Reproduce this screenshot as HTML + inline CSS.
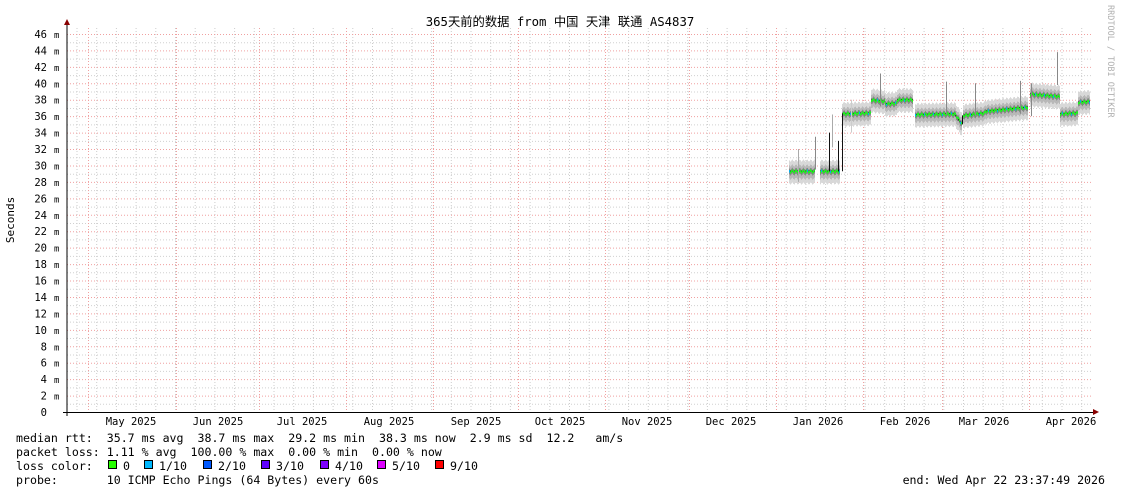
<!DOCTYPE html>
<html><head><meta charset="utf-8"><style>
html,body{margin:0;padding:0;background:#fff;width:1121px;height:494px;overflow:hidden}
svg{display:block}
text{font-family:"DejaVu Sans Mono","Liberation Mono","Noto Sans CJK SC",monospace;fill:#000}
</style></head><body>
<svg id="s" width="1121" height="494" xmlns="http://www.w3.org/2000/svg">
<rect width="1121" height="494" fill="#fff"/>
<g id="grid"></g>
<g id="data"></g>
<line x1="67" y1="24" x2="67" y2="416" stroke="#000" stroke-width="1"/>
<line x1="63" y1="412.5" x2="1096" y2="412.5" stroke="#000" stroke-width="1"/>
<polygon points="64,25 70,25 67,19" fill="#800"/>
<polygon points="1093,409 1093,415 1099,412" fill="#800"/>
<g id="lab" font-size="10.5"></g>
<text x="560" y="26" font-size="12.3" text-anchor="middle" style="font-family:'DejaVu Sans Mono','Noto Sans CJK SC',monospace">365天前的数据 from 中国 天津 联通 AS4837</text>
<text transform="translate(14,220) rotate(-90)" font-size="11" text-anchor="middle">Seconds</text>
<text transform="translate(1108,5) rotate(90)" font-size="8.5" style="fill:#b0b0b0">RRDTOOL / TOBI OETIKER</text>
<g font-size="11.6">
<text x="16" y="442" xml:space="preserve">median rtt:  35.7 ms avg  38.7 ms max  29.2 ms min  38.3 ms now  2.9 ms sd  12.2   am/s</text>
<text x="16" y="456" xml:space="preserve">packet loss: 1.11 % avg  100.00 % max  0.00 % min  0.00 % now</text>
<text x="16" y="470" xml:space="preserve">loss color:</text>
<text x="16" y="484" xml:space="preserve">probe:       10 ICMP Echo Pings (64 Bytes) every 60s</text>
<text x="1105" y="484" text-anchor="end">end: Wed Apr 22 23:37:49 2026</text>
<g id="leg"></g>
</g>
</svg>
<script>
var NS="http://www.w3.org/2000/svg";
function el(p,t,a,txt){var e=document.createElementNS(NS,t);for(var k in a)e.setAttribute(k,a[k]);if(txt!=null)e.textContent=txt;p.appendChild(e);return e;}
var g=document.getElementById('grid'),lab=document.getElementById('lab'),d=document.getElementById('data');
function Y(m){return 412-m*378/46;}
for(var x=77;x<1093;x+=19.7){el(g,'line',{x1:x,y1:28,x2:x,y2:412,stroke:'#ccc','stroke-dasharray':'1,2'});}
for(var m=1;m<=46;m++){el(g,'line',{x1:67,y1:Y(m)+.5,x2:1093,y2:Y(m)+.5,stroke:m%2?'#d0d0d0':'#f0a0a0','stroke-dasharray':'1,2'});}
var months=[88,176,259,346,433,518,605,689,776,863,942,1029];
months.forEach(function(x){el(g,'line',{x1:x+.5,y1:28,x2:x+.5,y2:412,stroke:'#f0a0a0','stroke-dasharray':'1,2'});});
var mn=['May 2025','Jun 2025','Jul 2025','Aug 2025','Sep 2025','Oct 2025','Nov 2025','Dec 2025','Jan 2026','Feb 2026','Mar 2026','Apr 2026'];
var mx=[131,218,302,389,476,560,647,731,818,905,984,1071];
for(var i=0;i<12;i++)el(lab,'text',{x:mx[i],y:425,'text-anchor':'middle'},mn[i]);
for(var m=0;m<=46;m+=2){el(lab,'text',{x:47,y:Y(m)+4,'text-anchor':'end'},String(m));if(m)el(lab,'text',{x:54,y:Y(m)+4,'font-size':'9'},'m');}
var segs=[[789,815,29.3,29.3],[820,840,29.3,29.3],[842,871,36.3,36.4],[871,885,38,37.8],[885,897,37.5,37.6],[897,913,38,38],[915,955,36.2,36.3],[955,962,36.2,35],[963,985,36.1,36.4],[985,1028,36.6,37.1],[1030,1060,38.7,38.4],[1060,1078,36.3,36.4],[1078,1090,37.7,37.8]];
var dpts=[];
segs.forEach(function(s){
 for(var x=s[0];x<s[1];x++){var t=(x-s[0])/(s[1]-s[0]);var v=s[2]+(s[3]-s[2])*t+(Math.sin(x*1.7)*0.12);
  el(d,'rect',{x:x,y:Y(v+1.3),width:1,height:Y(v-1.5)-Y(v+1.3),fill:'#d8d8d8'});
  el(d,'rect',{x:x,y:Y(v+0.7),width:1,height:Y(v-0.9)-Y(v+0.7),fill:'#b8b8b8'});
  el(d,'rect',{x:x,y:Y(v+0.3),width:1,height:Y(v-0.4)-Y(v+0.3),fill:'#888'});
  dpts.push([x,v]);}
});
var pts='';segs.forEach(function(s){pts+='M'+s[0]+','+Y(s[2])+'L'+s[1]+','+Y(s[3]);});
el(d,'path',{d:pts,stroke:'#000',fill:'none','stroke-width':1});
dpts.forEach(function(p,i){el(d,'rect',{x:p[0],y:Y(p[1])-1,width:1,height:2.5,fill:(i%9==0)?'#00b0f0':'#20f020'});});
[[842,29.3,36.3],[829,29.3,34],[838,29.3,33],[962,35,36.1]].forEach(function(v){el(d,'line',{x1:v[0]+.5,y1:Y(v[1]),x2:v[0]+.5,y2:Y(v[2]),stroke:'#111'});});
[[880,41.2,'#888'],[946,40.2,'#888'],[975,40,'#888'],[1057,43.8,'#888'],[1020,40.3,'#888'],[1031,40,'#888'],[798,32,'#aaa'],[815,33.5,'#888'],[832,36.2,'#aaa'],[851,38,'#ccc']].forEach(function(v){el(d,'line',{x1:v[0]+.5,y1:Y(v[1]),x2:v[0]+.5,y2:Y(v[1]-4),stroke:v[2]});});
var lg=document.getElementById('leg');
var cols=['#26ff00','#00b8ff','#0059ff','#5e00ff','#7e00ff','#dd00ff','#ff0000'],lx=[108,144,203,261,320,377,435],lt=['0','1/10','2/10','3/10','4/10','5/10','9/10'];
for(var i=0;i<7;i++){el(lg,'rect',{x:lx[i]+.5,y:460.5,width:8,height:8,fill:cols[i],stroke:'#000'});el(lg,'text',{x:lx[i]+15,y:470},lt[i]);}
</script>
</body></html>
